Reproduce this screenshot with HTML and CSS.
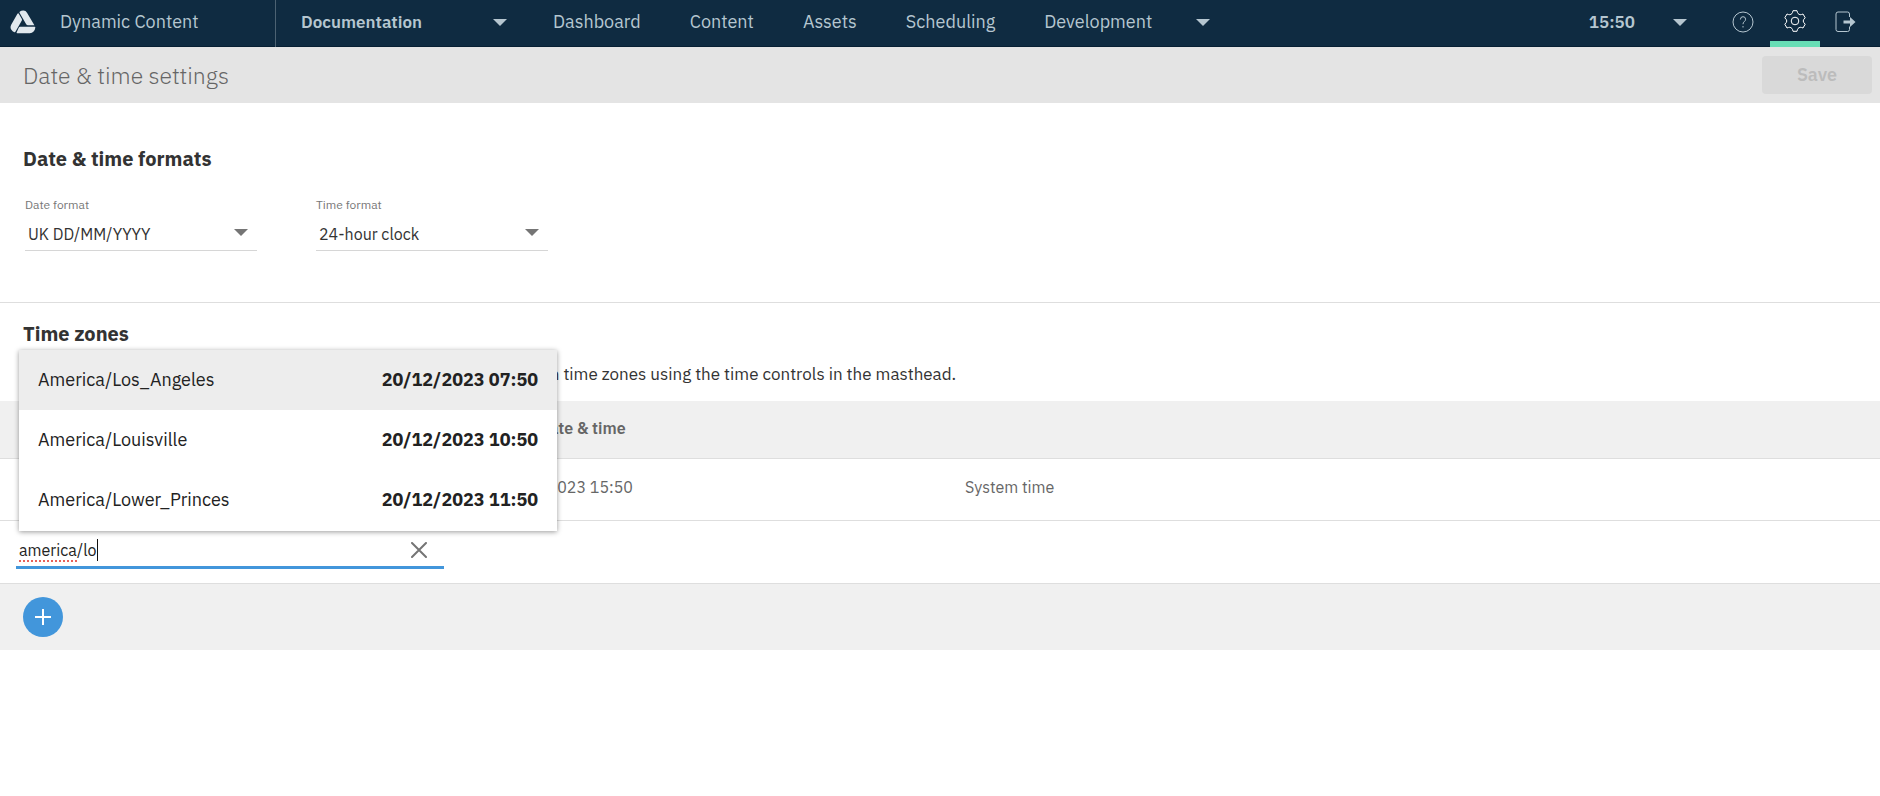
FILE: index.html
```html
<!DOCTYPE html>
<html lang="en">
<head>
<meta charset="utf-8">
<title>Date &amp; time settings</title>
<link rel="stylesheet" href="styles.css">
</head>
<body>
<header class="masthead">
  <a class="brand" href="#">
    <svg class="brand-logo" viewBox="0 0 26 24" aria-hidden="true">
      <path d="M10 1.500Q11.200 0.400 13.500 0.500Q15.800 0.600 17 2.700L24.400 15.300H18Q16.800 15.300 16.200 14.200L9.500 2.800Q9.400 2 10 1.500Z"/>
      <path d="M8 3.200Q8.500 3.100 8.800 3.700L11.700 8.700Q12.300 9.700 11.700 10.700L5.700 21.300Q5.200 22.400 4.300 22.200Q2.500 21.600 1.200 19.500Q-0.100 17.200 1.200 14.700L7.300 4Z"/>
      <path d="M10.200 16.800H24.700Q25.500 16.800 25.300 17.700Q25 20 23.600 21.600Q22.100 23.300 19.900 23.300H7.300Q6.200 23.300 6.700 22.200L8.700 17.800Q9.100 16.800 10.200 16.800Z"/>
    </svg>
    <span>Dynamic Content</span>
  </a>
  <button class="hub-picker" type="button" aria-haspopup="menu">Documentation<span class="caret"></span></button>
  <nav class="main-nav">
    <a href="#">Dashboard</a>
    <a href="#">Content</a>
    <a href="#">Assets</a>
    <a href="#">Scheduling</a>
    <button type="button" aria-haspopup="menu">Development<span class="caret"></span></button>
  </nav>
  <div class="tools">
    <button class="clock" type="button" aria-haspopup="menu">15:50<span class="caret"></span></button>
    <button class="tool" type="button" aria-label="Help">
      <svg viewBox="0 0 24 24" aria-hidden="true"><circle cx="12" cy="12" r="10"/><path d="M9.400 9.500Q9.400 6.700 12 6.700Q14.600 6.700 14.600 9.200Q14.600 10.600 13.300 11.600Q12 12.600 12 14.200M12 16V17.500"/></svg>
    </button>
    <button class="tool tool-active" type="button" aria-label="Settings">
      <svg viewBox="0 0 24 24" aria-hidden="true"><circle cx="12" cy="12" r="3.800"/><path d="M10 1.700H14Q14.400 3.700 15 4.500Q16 5.500 17.200 5.700Q18.500 5.700 20 5L22.200 8.800Q20.300 10.500 20.200 12Q20.300 13.500 22.200 15.200L20 19Q18.500 18.300 17.200 18.300Q16 18.500 15 19.500Q14.400 20.300 14 22.300H10Q9.600 20.300 9 19.500Q8 18.500 6.800 18.300Q5.500 18.300 4 19L1.800 15.200Q3.700 13.500 3.800 12Q3.700 10.500 1.800 8.800L4 5Q5.500 5.700 6.800 5.700Q8 5.500 9 4.500Q9.600 3.700 10 1.700Z"/></svg>
    </button>
    <button class="tool" type="button" aria-label="Log out">
      <svg viewBox="0 0 24 24" aria-hidden="true"><path d="M16.500 7V4Q16.500 2 14.500 2H5Q3 2 3 4V19.500Q3 21.500 5 21.500H14.500Q16.500 21.500 16.500 19.500V16.500"/><path class="solid" d="M10.500 10.400H17V7L22.500 12L17 17V13.500H10.500Z"/></svg>
    </button>
  </div>
</header>

<div class="titlebar">
  <h1>Date &amp; time settings</h1>
  <button class="save" type="button" disabled>Save</button>
</div>

<main>
  <section class="formats">
    <h2>Date &amp; time formats</h2>
    <div class="fields">
      <div class="field">
        <label for="date-format">Date format</label>
        <div class="select"><select id="date-format"><option>UK DD/MM/YYYY</option></select><span class="caret"></span></div>
      </div>
      <div class="field">
        <label for="time-format">Time format</label>
        <div class="select"><select id="time-format"><option>24-hour clock</option></select><span class="caret"></span></div>
      </div>
    </div>
  </section>

  <section class="zones">
    <h2>Time zones</h2>
    <p>Choose the time zones you want to work with. You can switch between time zones using the time controls in the masthead.</p>
    <table>
      <thead>
        <tr><th class="col-zone"></th><th class="col-time">Local date &amp; time</th><th></th></tr>
      </thead>
      <tbody>
        <tr><td></td><td>20/12/2023 15:50</td><td>System time</td></tr>
        <tr class="edit-row">
          <td colspan="3">
            <div class="zone-search">
              <input type="text" value="america/lo" aria-label="Time zone" spellcheck="false">
              <span class="typo" aria-hidden="true"></span>
              <span class="text-cursor" aria-hidden="true"></span>
              <button class="clear" type="button" aria-label="Clear">
                <svg viewBox="0 0 16 16" aria-hidden="true"><path d="M1 1L15 15M15 1L1 15"/></svg>
              </button>
              <ul class="suggestions">
                <li class="highlighted"><button type="button">America/Los_Angeles<b>20/12/2023 07:50</b></button></li>
                <li><button type="button">America/Louisville<b>20/12/2023 10:50</b></button></li>
                <li><button type="button">America/Lower_Princes<b>20/12/2023 11:50</b></button></li>
              </ul>
            </div>
          </td>
        </tr>
      </tbody>
    </table>
    <div class="add-bar">
      <button class="add" type="button" aria-label="Add time zone">
        <svg viewBox="0 0 16 16" aria-hidden="true"><path d="M8 0V16M0 8H16"/></svg>
      </button>
    </div>
  </section>
</main>
</body>
</html>
```

FILE: styles.css
```css
* {
  box-sizing: border-box;
}

body {
  margin: 0;
  background: #fff;
  color: #333;
  font: 17px/24px "IBM Plex Sans", Roboto, "Liberation Sans", sans-serif;
}

button,
input,
select {
  margin: 0;
  padding: 0;
  border: 0;
  background: none;
  color: inherit;
  font: inherit;
}

h1,
h2,
p {
  margin: 0;
}

.caret {
  border: 7px solid transparent;
  border-top-color: currentColor;
  border-bottom: 0;
}

/* Masthead */
.masthead {
  display: flex;
  height: 47px;
  background: #0f2b41;
  box-shadow: inset 0 -1px #071f33;
  color: #b5c6d0;
  font-size: 18px;
}

.masthead a {
  color: inherit;
  text-decoration: none;
}

.brand {
  display: flex;
  align-items: center;
  gap: 24px;
  width: 276px;
  padding: 0 10px 3px;
  border-right: 1px solid #4c6272;
}

.brand-logo {
  width: 26px;
  height: 24px;
  fill: #e1e8ed;
}

.hub-picker {
  display: flex;
  align-items: center;
  justify-content: space-between;
  width: 231px;
  padding: 0 0 3px 25px;
  font-size: 17px;
  font-weight: 600;
}

.main-nav {
  display: flex;
  align-items: center;
  gap: 49px;
  padding: 0 0 3px 46px;
}

.main-nav button {
  display: flex;
  align-items: center;
  gap: 44px;
}

.tools {
  display: flex;
  margin-left: auto;
  padding-right: 10px;
}

.clock {
  display: flex;
  align-items: center;
  gap: 38px;
  margin-right: 31px;
  padding-bottom: 3px;
  font-size: 17px;
  font-weight: 600;
}

.tool {
  display: flex;
  align-items: center;
  justify-content: center;
  width: 50px;
  padding-bottom: 3px;
}

.tool-active {
  margin-left: 2px;
  padding-top: 3px;
  border-bottom: 6px solid #67ddb5;
  color: #fff;
}

.tool svg {
  width: 24px;
  height: 24px;
  fill: none;
  stroke: currentColor;
  stroke-linejoin: round;
}

.tool .solid {
  fill: currentColor;
  stroke: none;
}

/* Title bar */
.titlebar {
  display: flex;
  align-items: center;
  justify-content: space-between;
  height: 56px;
  padding: 0 8px 0 23px;
  background: #e4e4e4;
}

.titlebar h1 {
  color: #666;
  font-size: 23px;
  font-weight: 300;
}

.save {
  width: 110px;
  height: 38px;
  border-radius: 4px;
  background: #d9d9d9;
  color: #bcbcbc;
  font-size: 18px;
  font-weight: 600;
}

h2 {
  font-size: 20px;
  font-weight: 700;
}

/* Formats */
.formats {
  padding: 44px 23px 51px;
  border-bottom: 1px solid #dedede;
}

.fields {
  display: flex;
  gap: 59px;
  margin-top: 24px;
  padding-left: 2px;
}

.field {
  width: 232px;
}

.field label {
  display: block;
  color: #777;
  font-size: 12px;
  line-height: 20px;
}

.select {
  display: flex;
  align-items: center;
  height: 36px;
  border-bottom: 1px solid #d6d6d6;
  color: #757575;
  font-size: 16px;
}

.select select {
  flex: 1;
  height: 34px;
  margin-right: -24px;
  padding: 2px 24px 0 3px;
  appearance: none;
  color: #333;
}

.select .caret {
  margin-right: 9px;
}

/* Time zones */
.zones h2 {
  padding: 19px 23px 0;
}

.zones p {
  padding: 16px 23px 15px;
}

table {
  width: 100%;
  border-collapse: collapse;
  table-layout: fixed;
  color: #666;
  font-size: 16px;
  text-align: left;
}

th,
td {
  height: 62px;
  padding: 0 0 4px 23px;
  border-bottom: 1px solid #dedede;
  font-weight: 400;
}

th {
  height: 57px;
  padding-bottom: 2px;
  background: #f0f0f0;
  font-weight: 600;
}

.col-zone {
  width: 474px;
}

.col-time {
  width: 468px;
}

.edit-row td {
  height: 63px;
  padding: 0 16px 4px;
}

.zone-search {
  position: relative;
  display: flex;
  align-items: center;
  width: 428px;
  height: 38px;
  padding-top: 4px;
  border-bottom: 3px solid #4296db;
  color: #757575;
}

.zone-search input {
  flex: 1;
  min-width: 0;
  height: 30px;
  padding-left: 3px;
  outline: 0;
  color: #222;
}

.typo {
  position: absolute;
  left: 3px;
  bottom: 4px;
  width: 58px;
  border-bottom: 2px dotted #e8625a;
}

.text-cursor {
  position: absolute;
  left: 81px;
  bottom: 5px;
  width: 1px;
  height: 22px;
  background: #111;
}

.clear {
  display: flex;
  margin-right: 17px;
}

.clear svg {
  width: 16px;
  height: 16px;
  fill: none;
  stroke: #757575;
  stroke-linecap: round;
  stroke-width: 2;
}

.suggestions {
  position: absolute;
  bottom: 35px;
  left: 3px;
  width: 538px;
  margin: 0;
  padding: 0 0 1px;
  background: #fff;
  box-shadow: 0 1px 5px rgba(0, 0, 0, 0.4);
  color: #222;
  font-size: 18px;
  list-style: none;
}

.suggestions button {
  display: flex;
  align-items: center;
  justify-content: space-between;
  width: 100%;
  height: 60px;
  padding: 0 19px;
}

.suggestions .highlighted {
  background: #ededed;
}

.add-bar {
  padding: 13px 23px;
  background: #f0f0f0;
}

.add {
  display: flex;
  align-items: center;
  justify-content: center;
  width: 40px;
  height: 40px;
  border-radius: 50%;
  background: #4296db;
}

.add svg {
  width: 16px;
  height: 16px;
  stroke: #fff;
  stroke-width: 2;
}
```
